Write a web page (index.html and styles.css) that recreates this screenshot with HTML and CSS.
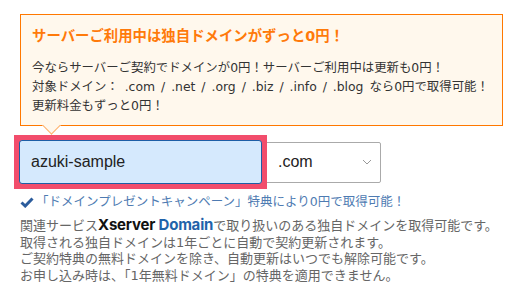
FILE: index.html
```html
<!DOCTYPE html>
<html lang="ja">
<head>
    <meta charset="UTF-8">
    <meta name="viewport" content="width=device-width, initial-scale=1.0">
    <title>ドメイン取得</title>
    <link rel="stylesheet" href="styles.css">
</head>
<body>
    <div class="panel">
        <div class="campaign">
            <p class="campaign-title">サーバーご利用中は独自ドメインがずっと0円！</p>
            <p class="campaign-text">今ならサーバーご契約でドメインが0円！サーバーご利用中は更新も0円！<br>対象ドメイン： .com / .net / .org / .biz / .info / .blog なら0円で取得可能！<br>更新料金もずっと0円！</p>
        </div>

        <div class="domain-row">
            <div class="input-frame">
                <input class="domain-input" type="text" value="azuki-sample">
            </div>
            <div class="tld-select">
                <span>.com</span>
                <svg class="chevron" width="10" height="6" viewBox="0 0 10 6"><path d="M1 1 L5 5 L9 1" fill="none" stroke="#999" stroke-width="1"/></svg>
            </div>
        </div>

        <p class="check-note">
            <svg class="check" width="14" height="11" viewBox="0 0 14 11"><path d="M1.5 5.5 L5.2 9 L12.5 1.5" fill="none" stroke="#2b5c9c" stroke-width="3"/></svg>
            「ドメインプレゼントキャンペーン」特典により0円で取得可能！
        </p>

        <p class="note">関連サービス<span class="brand">Xserver <span class="brand-blue">Domain</span></span>で取り扱いのある独自ドメインを取得可能です。<br>取得される独自ドメインは1年ごとに自動で契約更新されます。<br>ご契約特典の無料ドメインを除き、自動更新はいつでも解除可能です。<br>お申し込み時は、「1年無料ドメイン」の特典を適用できません。</p>
    </div>
</body>
</html>
```

FILE: styles.css
```css
body {
    margin: 0;
    padding: 0;
    background-color: #fff;
    font-family: "DejaVu Sans", "Noto Sans CJK JP", sans-serif;
    color: #333;
}
p {
    margin: 0;
}
.panel {
    padding: 14px 0 0 20px;
}
.campaign {
    position: relative;
    width: 459px;
    padding: 11px 11px 10px 11px;
    background-color: #fff8ed;
    border: 1px solid #ff7800;
}
.campaign::after {
    content: "";
    position: absolute;
    left: 24px;
    bottom: -7px;
    width: 12px;
    height: 12px;
    background-color: #fff8ed;
    border-right: 1px solid #ffb06a;
    border-bottom: 1px solid #ffb06a;
    transform: rotate(45deg);
}
.campaign-title {
    color: #ff7a0a;
    font-size: 14.4px;
    font-weight: bold;
    line-height: 20px;
    margin-bottom: 12px;
}
.campaign-text {
    font-size: 12.4px;
    line-height: 19px;
    word-spacing: 2px;
    color: #333;
}
.domain-row {
    display: flex;
    align-items: center;
    margin: 9px 0 0 -6px;
}
.input-frame {
    position: relative;
    z-index: 1;
    padding: 5px;
    background-color: #f24d6c;
}
.domain-input {
    display: block;
    box-sizing: border-box;
    width: 243px;
    height: 44px;
    margin: 0;
    padding: 0 11px;
    border: 1px solid #1d5ea6;
    border-radius: 3px;
    outline: none;
    background-color: #d5e9fd;
    font-family: "Liberation Sans", sans-serif;
    font-size: 16px;
    color: #222;
}
.tld-select {
    box-sizing: border-box;
    width: 119px;
    height: 41px;
    margin-left: -5px;
    display: flex;
    align-items: center;
    justify-content: space-between;
    padding: 0 8px 0 15px;
    border: 1px solid #aaa;
    border-radius: 2px;
    background-color: #fff;
    font-family: "Liberation Sans", sans-serif;
    font-size: 16px;
    color: #222;
}
.chevron {
    display: block;
}
.check-note {
    display: flex;
    align-items: center;
    margin-top: 5px;
    font-size: 12.5px;
    line-height: 16px;
    color: #4e7bb2;
}
.check {
    margin-right: 2px;
}
.note {
    margin-top: 7px;
    font-size: 13px;
    line-height: 16.5px;
    color: #666;
}
.brand {
    font-family: Inter, "Liberation Sans", sans-serif;
    font-size: 15px;
    font-weight: bold;
    color: #111;
    letter-spacing: -0.2px;
}
.brand-blue {
    color: #1f63aa;
}
```
